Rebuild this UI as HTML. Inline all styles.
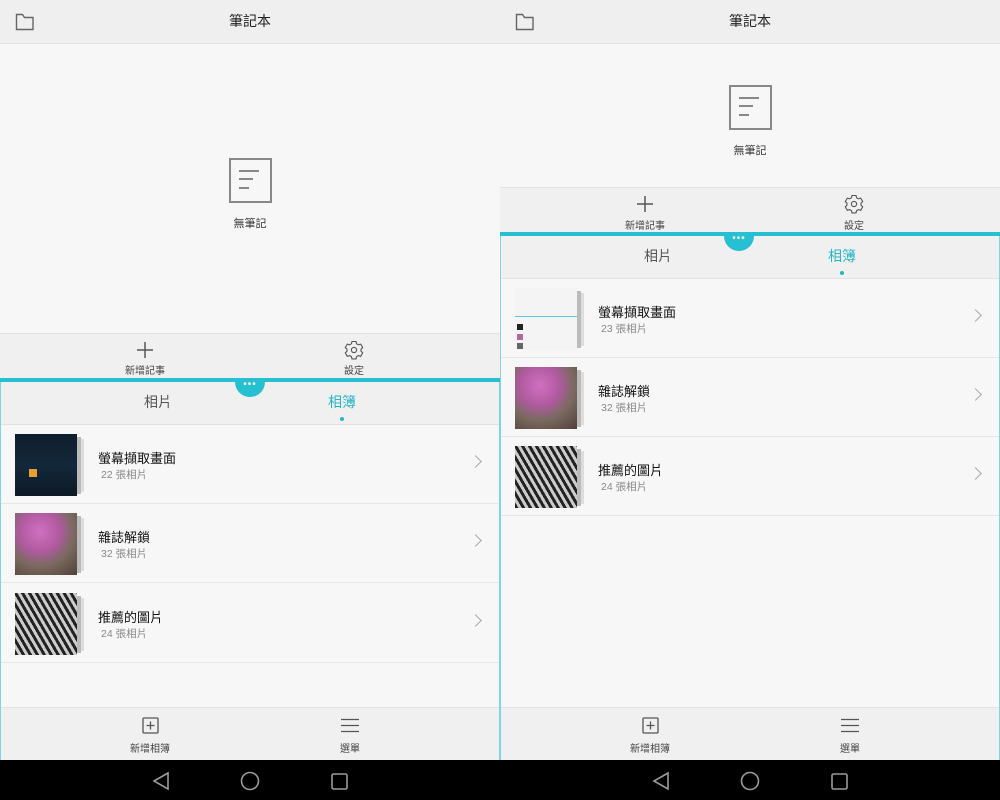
<!DOCTYPE html>
<html><head><meta charset="utf-8"><style>
*{margin:0;padding:0;box-sizing:border-box}
body{width:1000px;height:800px;background:#000;font-family:"Liberation Sans","Noto Sans CJK TC",sans-serif;position:relative;overflow:hidden}
.p{position:absolute;top:0;width:500px;height:760px;background:#f7f7f7}
.a{position:absolute}
.hdr{left:0;top:0;width:500px;height:44px;background:#efefef;border-bottom:1px solid #e2e2e2}
.ttl{left:0;width:500px;top:11px;text-align:center;font-size:14px;color:#222}
.tb{left:0;width:500px;height:45px;background:#f0f0f0;border-top:1px solid #e2e2e2}
.lbl{font-size:10px;color:#444;text-align:center;width:80px}
.teal{left:0;width:500px;height:4px;background:#27c0d3}
.bub{width:30px;height:16px;border-radius:0 0 15px 15px;background:#27c0d3;left:235px;color:#fff;font-size:10px;text-align:center;line-height:6px;letter-spacing:1px}
.tabs{left:1px;width:498px;height:43px;background:#f0f0f0;border-bottom:1px solid #e2e2e2}
.tab{font-size:14px;color:#555;width:60px;text-align:center}
.row{left:1px;width:498px;height:79px;border-bottom:1px solid #e6e6e6}
.th{left:14px;top:9px;width:62px;height:62px}
.sh1{left:76px;top:12px;width:4px;height:57px;background:#bbb}
.sh2{left:80px;top:14px;width:3px;height:53px;background:#ddd}
.nm{left:97px;top:23px;font-size:13px;color:#111}
.ct{left:100px;top:42px;font-size:10.5px;color:#888}
.chev{left:470px;top:32px;width:9px;height:9px;border-top:1px solid #aaa;border-right:1px solid #aaa;transform:rotate(45deg)}
.bb{left:1px;width:498px;top:707px;height:53px;background:#f0f0f0;border-top:1px solid #e2e2e2}
.side{top:0;width:1px;height:760px;background:#7fd6e0}
</style></head><body>

<!-- LEFT -->
<div class="p" style="left:0">
 <div class="a hdr"></div>
 <svg class="a" style="left:15px;top:13px" width="20" height="18"><path d="M1.5 1.5h6l2 3h8.5v12h-16.5z" fill="none" stroke="#666" stroke-width="1.4"/></svg>
 <div class="a ttl">筆記本</div>
 <svg class="a" style="left:229px;top:158px" width="43" height="45"><rect x="1" y="1" width="41" height="43" fill="none" stroke="#888" stroke-width="2"/><path d="M10 13h20M10 21h14M10 30h10" stroke="#888" stroke-width="2"/></svg>
 <div class="a" style="left:210px;top:215px;width:80px;text-align:center;font-size:11px;color:#333">無筆記</div>
 <div class="a tb" style="top:333px"></div>
 <svg class="a" style="left:136px;top:341px" width="18" height="18"><path d="M9 1v16M1 9h16" stroke="#555" stroke-width="1.5"/></svg>
 <div class="a lbl" style="left:105px;top:362px">新增記事</div>
 <svg class="a" style="left:344px;top:340px" width="20" height="20" viewBox="0 0 20 20"><path d="M8 1.5h4l.6 2.3 1.8 1 2.3-.7 2 3.4-1.7 1.7v2l1.7 1.7-2 3.4-2.3-.7-1.8 1-.6 2.3h-4l-.6-2.3-1.8-1-2.3.7-2-3.4 1.7-1.7v-2L1.3 7.5l2-3.4 2.3.7 1.8-1z" fill="none" stroke="#555" stroke-width="1.1"/><circle cx="10" cy="10" r="2.6" fill="none" stroke="#555" stroke-width="1.1"/></svg>
 <div class="a lbl" style="left:314px;top:362px">設定</div>
 <div class="a side" style="left:0;top:380px;height:380px"></div><div class="a side" style="left:499px;top:380px;height:380px"></div>
 <div class="a tabs" style="top:382px"></div>
 <div class="a teal" style="top:378px"></div>
 <div class="a bub" style="top:381px;height:16px;line-height:8px">•••</div>
 <div class="a tab" style="left:128px;top:392px">相片</div>
 <div class="a tab" style="left:312px;top:392px;color:#27b5c7">相簿</div>
 <div class="a" style="left:340px;top:417px;width:4px;height:4px;border-radius:2px;background:#27b5c7"></div>
 <div class="a row" style="top:425px"><div class="a sh2"></div><div class="a sh1"></div><div class="a th" style="background:linear-gradient(#0f1e2c,#13283a 50%,#0d1a26)"><div class="a" style="left:14px;top:35px;width:8px;height:8px;background:#e5a030"></div></div><div class="a nm">螢幕擷取畫面</div><div class="a ct">22 張相片</div><div class="a chev"></div></div>
 <div class="a row" style="top:504px"><div class="a sh2"></div><div class="a sh1"></div><div class="a th" style="background:radial-gradient(circle at 40% 30%,#d070c0,#b05aa0 35%,#7a6a60 60%,#504038)"></div><div class="a nm">雜誌解鎖</div><div class="a ct">32 張相片</div><div class="a chev"></div></div>
 <div class="a row" style="top:584px"><div class="a sh2"></div><div class="a sh1"></div><div class="a th" style="background:repeating-linear-gradient(60deg,#222 0 3px,#ccc 3px 6px)"></div><div class="a nm">推薦的圖片</div><div class="a ct">24 張相片</div><div class="a chev"></div></div>
 <div class="a bb"></div>
 <svg class="a" style="left:142px;top:717px" width="17" height="17"><rect x="1" y="1" width="15" height="15" rx="1" fill="none" stroke="#555" stroke-width="1.3"/><path d="M8.5 4.5v8M4.5 8.5h8" stroke="#555" stroke-width="1.3"/></svg>
 <div class="a lbl" style="left:110px;top:740px">新增相簿</div>
 <svg class="a" style="left:341px;top:718px" width="18" height="15"><path d="M0 1.5h18M0 7.5h18M0 13.5h18" stroke="#555" stroke-width="1.3"/></svg>
 <div class="a lbl" style="left:310px;top:740px">選單</div>
</div>

<!-- RIGHT -->
<div class="p" style="left:500px">
 <div class="a hdr"></div>
 <svg class="a" style="left:15px;top:13px" width="20" height="18"><path d="M1.5 1.5h6l2 3h8.5v12h-16.5z" fill="none" stroke="#666" stroke-width="1.4"/></svg>
 <div class="a ttl">筆記本</div>
 <svg class="a" style="left:229px;top:85px" width="43" height="45"><rect x="1" y="1" width="41" height="43" fill="none" stroke="#888" stroke-width="2"/><path d="M10 13h20M10 21h14M10 30h10" stroke="#888" stroke-width="2"/></svg>
 <div class="a" style="left:210px;top:142px;width:80px;text-align:center;font-size:11px;color:#333">無筆記</div>
 <div class="a tb" style="top:187px"></div>
 <svg class="a" style="left:136px;top:195px" width="18" height="18"><path d="M9 1v16M1 9h16" stroke="#555" stroke-width="1.5"/></svg>
 <div class="a lbl" style="left:105px;top:217px">新增記事</div>
 <svg class="a" style="left:344px;top:194px" width="20" height="20" viewBox="0 0 20 20"><path d="M8 1.5h4l.6 2.3 1.8 1 2.3-.7 2 3.4-1.7 1.7v2l1.7 1.7-2 3.4-2.3-.7-1.8 1-.6 2.3h-4l-.6-2.3-1.8-1-2.3.7-2-3.4 1.7-1.7v-2L1.3 7.5l2-3.4 2.3.7 1.8-1z" fill="none" stroke="#555" stroke-width="1.1"/><circle cx="10" cy="10" r="2.6" fill="none" stroke="#555" stroke-width="1.1"/></svg>
 <div class="a lbl" style="left:314px;top:217px">設定</div>
 <div class="a side" style="left:0;top:235px;height:525px"></div><div class="a side" style="left:499px;top:235px;height:525px"></div>
 <div class="a tabs" style="top:236px"></div>
 <div class="a teal" style="top:232px"></div>
 <div class="a bub" style="left:224px;top:235px;height:16px;line-height:8px">•••</div>
 <div class="a tab" style="left:128px;top:246px">相片</div>
 <div class="a tab" style="left:312px;top:246px;color:#27b5c7">相簿</div>
 <div class="a" style="left:340px;top:271px;width:4px;height:4px;border-radius:2px;background:#27b5c7"></div>
 <div class="a row" style="top:279px"><div class="a sh2"></div><div class="a sh1"></div><div class="a th" style="background:#f4f4f4"><div class="a" style="left:0;top:28px;width:62px;height:1px;background:#5cc8d6"></div><div class="a" style="left:2px;top:36px;width:6px;height:6px;background:#222"></div><div class="a" style="left:2px;top:46px;width:6px;height:6px;background:#b06aa0"></div><div class="a" style="left:2px;top:55px;width:6px;height:6px;background:#666"></div></div><div class="a nm">螢幕擷取畫面</div><div class="a ct">23 張相片</div><div class="a chev"></div></div>
 <div class="a row" style="top:358px"><div class="a sh2"></div><div class="a sh1"></div><div class="a th" style="background:radial-gradient(circle at 40% 30%,#d070c0,#b05aa0 35%,#7a6a60 60%,#504038)"></div><div class="a nm">雜誌解鎖</div><div class="a ct">32 張相片</div><div class="a chev"></div></div>
 <div class="a row" style="top:437px"><div class="a sh2"></div><div class="a sh1"></div><div class="a th" style="background:repeating-linear-gradient(60deg,#222 0 3px,#ccc 3px 6px)"></div><div class="a nm">推薦的圖片</div><div class="a ct">24 張相片</div><div class="a chev"></div></div>
 <div class="a bb"></div>
 <svg class="a" style="left:142px;top:717px" width="17" height="17"><rect x="1" y="1" width="15" height="15" rx="1" fill="none" stroke="#555" stroke-width="1.3"/><path d="M8.5 4.5v8M4.5 8.5h8" stroke="#555" stroke-width="1.3"/></svg>
 <div class="a lbl" style="left:110px;top:740px">新增相簿</div>
 <svg class="a" style="left:341px;top:718px" width="18" height="15"><path d="M0 1.5h18M0 7.5h18M0 13.5h18" stroke="#555" stroke-width="1.3"/></svg>
 <div class="a lbl" style="left:310px;top:740px">選單</div>
</div>

<!-- nav bar -->
<svg class="a" style="left:0;top:760px" width="1000" height="40">
 <g fill="none" stroke="#9a9a9a" stroke-width="1.6">
  <path d="M168 13L154 21L168 29Z"/><circle cx="250" cy="21" r="8.5"/><rect x="332" y="14" width="15" height="15" rx="1.5"/>
  <path d="M668 13L654 21L668 29Z"/><circle cx="750" cy="21" r="8.5"/><rect x="832" y="14" width="15" height="15" rx="1.5"/>
 </g>
</svg>
</body></html>
